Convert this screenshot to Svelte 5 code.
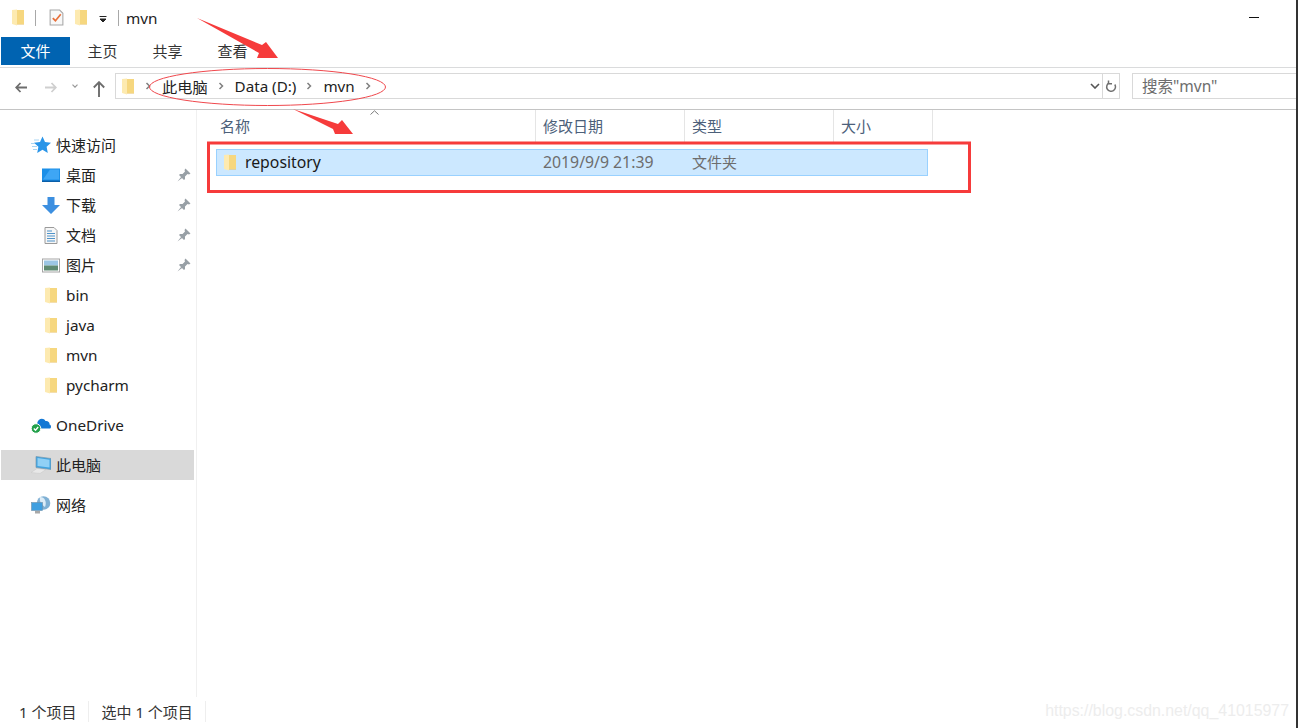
<script>
  const pinned = [
    { name: '桌面', icon: 'desktop' },
    { name: '下载', icon: 'download' },
    { name: '文档', icon: 'doc' },
    { name: '图片', icon: 'picture' }
  ];
  const folders = ['bin', 'java', 'mvn', 'pycharm'];
  const tabs = ['主页', '共享', '查看'];
  const crumbs = ['此电脑', 'Data (D:)', 'mvn'];
</script>

{#snippet folder(cls = 'ico')}
  <svg class={cls} viewBox="0 0 14 17">
    <path d="M5 1 L13 1 L13 15 L5 15 Z" fill="#f6d77f" />
    <path d="M1 1 L6 0.5 L6 16.5 L1 15 Z" fill="#fdeab0" />
    <path d="M6 15 L13 15 L13 15.5 L6 15.5 Z" fill="#e6bd5c" />
  </svg>
{/snippet}

{#snippet chevron()}
  <svg class="crumb-sep" viewBox="0 0 6 8"><path d="M1.5 1 L4.5 4 L1.5 7" fill="none" stroke="#808080" stroke-width="1.5" /></svg>
{/snippet}

<div class="window">
  <header class="titlebar">
    <span class="qa first">{@render folder()}</span>
    <span class="vline"></span>
    <svg class="check" viewBox="0 0 14 16">
      <path d="M1 1 H10 L13 4 V15 H1 Z" fill="#f8f8f8" stroke="#a8a8a8" />
      <path d="M3.5 8.5 L6 11 L11 5" fill="none" stroke="#e8703a" stroke-width="1.6" />
    </svg>
    <span class="qa">{@render folder()}</span>
    <svg class="drop" viewBox="0 0 8 7"><path d="M0.5 0.5 H7.5 M1 3 H7 L4 6 Z" stroke="#222" fill="#222" stroke-width="1" /></svg>
    <span class="vline two"></span>
    <span class="title">mvn</span>
    <span class="minimize"></span>
  </header>

  <nav class="ribbon">
    <div class="tab file">文件</div>
    {#each tabs as tab}
      <div class="tab">{tab}</div>
    {/each}
  </nav>

  <div class="addressrow">
    <svg class="nav back" viewBox="0 0 12 11"><path d="M5.5 1 L1.2 5.5 L5.5 10 M1.2 5.5 H12" fill="none" stroke="#6d6d6d" stroke-width="1.8" /></svg>
    <svg class="nav forward" viewBox="0 0 12 11"><path d="M6.5 1 L10.8 5.5 L6.5 10 M10.8 5.5 H0" fill="none" stroke="#cfcfcf" stroke-width="1.8" /></svg>
    <svg class="nav recent" viewBox="0 0 6 4"><path d="M0.5 0.7 L3 3.2 L5.5 0.7" fill="none" stroke="#9a9a9a" stroke-width="1.2" /></svg>
    <svg class="nav up" viewBox="0 0 12 16"><path d="M0.8 6.5 L6 1.2 L11.2 6.5 M6 1.2 V16" fill="none" stroke="#6d6d6d" stroke-width="1.9" /></svg>
    <div class="address">
      {@render folder('ico addr')}
      {@render chevron()}
      {#each crumbs as crumb}
        <span class="crumb">{crumb}</span>
        {@render chevron()}
      {/each}
      <svg class="addr-drop" viewBox="0 0 10 6"><path d="M1 1 L5 5 L9 1" fill="none" stroke="#555" stroke-width="1.6" /></svg>
      <span class="addr-refresh">
        <svg viewBox="0 0 12 13"><path d="M9.8 4.5 A4.4 4.4 0 1 1 4 3 M3.5 0.5 V3.8 H7" fill="none" stroke="#6f6f6f" stroke-width="1.5" /></svg>
      </span>
    </div>
    <div class="search">搜索"mvn"</div>
  </div>

  <div class="main">
    <aside class="sidebar">
      <div class="side-row top">
        <svg class="side-ico" viewBox="0 0 20 17">
          <path d="M11.5 0 L14 5.6 L20 6.3 L15.6 10.3 L16.8 16.5 L11.5 13.3 L6.2 16.5 L7.4 10.3 L3 6.3 L9 5.6 Z" fill="#2a95e8" />
          <path d="M3 3.5 H8 M0 7 H4 M1 10 H6 M2 13 H6" stroke="#a9d4f2" stroke-width="1" />
        </svg>
        <span class="cjk">快速访问</span>
      </div>
      {#each pinned as item}
        <div class="side-row sub">
          {#if item.icon === 'desktop'}
            <svg class="side-ico" viewBox="0 0 18 14">
              <rect x="0" y="0" width="18" height="13" fill="#1b8fe8" />
              <path d="M1 11 L8 1 H17 V11 Z" fill="#3ea6f5" />
              <rect x="0" y="12" width="18" height="1.5" fill="#0a5ea8" />
            </svg>
          {:else if item.icon === 'download'}
            <svg class="side-ico" viewBox="0 0 18 17"><path d="M5.5 0 H12.5 V8 H18 L9 17 L0 8 H5.5 Z" fill="#3c8fe0" /></svg>
          {:else if item.icon === 'doc'}
            <svg class="side-ico" viewBox="0 0 18 17">
              <path d="M3 0.5 H12 L15 3.5 V16.5 H3 Z" fill="#f6f6f6" stroke="#9a9a9a" />
              <path d="M5 4 H10 M5 6.5 H13 M5 9 H13 M5 11.5 H13 M5 14 H13" stroke="#4f93c9" stroke-width="1" />
            </svg>
          {:else}
            <svg class="side-ico" viewBox="0 0 18 14">
              <rect x="0.5" y="0.5" width="17" height="13" fill="#fff" stroke="#a5a5a5" />
              <rect x="2" y="2" width="14" height="5" fill="#9cc6e4" />
              <rect x="2" y="7" width="14" height="5" fill="#5f8a72" />
            </svg>
          {/if}
          <span class="cjk">{item.name}</span>
          <svg class="pin" viewBox="0 0 14 14">
            <path d="M8.5 0.5 L13.5 5.5 L12 6.5 L10.5 6 L8 8.5 L8 11 L7 12 L2 7 L3 6 L5.5 6 L8 3.5 L7.5 2 Z M4 9 L0.5 13.5 L5 10 Z" fill="#98a0a6" />
          </svg>
        </div>
      {/each}
      {#each folders as name}
        <div class="side-row sub">
          {@render folder('side-ico')}
          <span class="latin">{name}</span>
        </div>
      {/each}
      <div class="side-row top spaced">
        <svg class="side-ico" viewBox="0 0 20 17">
          <path d="M4 12 C1 12 2 6.5 6 7.5 C6.5 2 12.5 0.5 14.5 4.5 C17 4 19 6 18.5 8 C20.5 8.5 20.5 12 18.5 12 Z" fill="#1478d4" />
          <circle cx="5" cy="12" r="4.8" fill="#22a04a" stroke="#fff" />
          <path d="M2.8 12 L4.5 13.7 L7.2 10.5" fill="none" stroke="#fff" stroke-width="1.3" />
        </svg>
        <span class="latin">OneDrive</span>
      </div>
      <div class="side-row top spaced active">
        <svg class="side-ico" viewBox="0 0 20 18">
          <path d="M0 16.5 L6 12.5 L15 13.5 L9 17.5 Z" fill="#e8e8e8" stroke="#c8c8c8" stroke-width="0.5" />
          <path d="M5 0.5 L20 2.5 V13.5 L5 11.5 Z" fill="#3fa3e0" stroke="#7a99ad" stroke-width="0.7" />
          <path d="M6.5 2 L18.5 3.7 V11.5 L6.5 10 Z" fill="#90d0f5" />
        </svg>
        <span class="cjk">此电脑</span>
      </div>
      <div class="side-row top spaced">
        <svg class="side-ico" viewBox="0 0 20 18">
          <circle cx="12.5" cy="7" r="6.8" fill="#7fb0d4" />
          <path d="M9 1 C14 1 16 6 14 11 C11 9 8 6 9 1 Z" fill="#dcecf7" />
          <rect x="0.5" y="6.5" width="11" height="8" fill="#3f9fe0" stroke="#6f8fa8" stroke-width="0.6" />
          <rect x="4" y="15" width="5" height="2.5" fill="#a8a8a8" />
        </svg>
        <span class="cjk">网络</span>
      </div>
    </aside>

    <section class="content">
      <div class="columns">
        <div class="col name">名称</div>
        <div class="col">修改日期</div>
        <div class="col">类型</div>
        <div class="col size">大小</div>
        <svg class="sort" viewBox="0 0 9 5"><path d="M0.5 4.5 L4.5 0.8 L8.5 4.5" fill="none" stroke="#7a7a7a" stroke-width="1" /></svg>
      </div>
      <div class="row">
        <div class="cell name">
          {@render folder()}
          <span>repository</span>
        </div>
        <div class="cell date">2019/9/9 21:39</div>
        <div class="cell cjk">文件夹</div>
      </div>
    </section>
  </div>

  <footer class="status">
    <span class="count">1 个项目</span>
    <span class="selected">选中 1 个项目</span>
    <span class="watermark">https://blog.csdn.net/qq_41015977</span>
  </footer>

  <!-- red annotations drawn on top of the screenshot -->
  <svg class="marks" viewBox="0 0 1298 728">
    <polygon points="197,18 262,45 266,42 278,58 257,58 259,53" fill="#f63b3b" />
    <polygon points="293,109 338,124 342,120 353,134 335,134 333,129" fill="#f63b3b" />
    <ellipse cx="267.5" cy="87" rx="118" ry="18.5" fill="none" stroke="#f0484d" stroke-width="1" />
    <rect x="208.5" y="143" width="761" height="48.5" fill="none" stroke="#f63b3b" stroke-width="3" />
  </svg>
</div>

<style>
  :global(body) {
    margin: 0;
    background: #fff;
  }

  .window {
    position: relative;
    width: 1298px;
    height: 728px;
    box-sizing: border-box;
    border-right: 2px solid #333;
    display: flex;
    flex-direction: column;
    overflow: hidden;
    background: #fff;
    color: #222;
    font-family: "Noto Sans", "Noto Sans CJK SC", sans-serif;
    font-size: 15px;
  }

  .titlebar {
    height: 35px;
    padding-bottom: 2px;
    display: flex;
    align-items: center;
    padding-left: 11px;
    flex: none;
  }

  .qa {
    display: flex;
    width: 15px;
  }

  .first {
    margin-right: 9px;
  }

  .ico {
    width: 14px;
    height: 17px;
    flex: none;
  }

  .vline {
    width: 1px;
    height: 16px;
    background: #a8a8a8;
    margin-right: 13px;
  }

  .vline.two {
    margin: 0 7px 0 11px;
  }

  .check {
    width: 15px;
    height: 17px;
    margin-right: 10px;
  }

  .drop {
    width: 8px;
    height: 7px;
    margin-left: 10px;
    margin-top: 3px;
  }

  .title {
    font-size: 15.3px;
  }

  .minimize {
    width: 10px;
    height: 1px;
    background: #111;
    margin-left: auto;
    margin-right: 37px;
  }

  .ribbon {
    height: 30px;
    display: flex;
    flex: none;
    padding-left: 1px;
    border-bottom: 1px solid #dadbdc;
  }

  .tab {
    width: 65px;
    line-height: 28px;
    text-align: center;
    color: #333;
  }

  .tab.file {
    width: 69px;
    height: 28px;
    background: #0063b1;
    color: #fff;
  }

  .addressrow {
    height: 36px;
    padding-bottom: 5px;
    display: flex;
    align-items: center;
    flex: none;
    border-bottom: 1px solid #c4c4c4;
  }

  .nav {
    flex: none;
  }

  .back {
    width: 12px;
    height: 11px;
    margin-left: 15px;
    margin-top: 2px;
  }

  .forward {
    width: 12px;
    height: 11px;
    margin-left: 18px;
    margin-top: 2px;
  }

  .recent {
    width: 6px;
    height: 4px;
    margin-left: 15px;
  }

  .up {
    width: 12px;
    height: 16px;
    margin-left: 15px;
    margin-top: 5px;
    margin-right: 10px;
  }

  .address {
    width: 1005px;
    height: 26px;
    box-sizing: border-box;
    border: 1px solid #d9d9d9;
    display: flex;
    align-items: center;
    padding-left: 5px;
    flex: none;
  }

  .crumb-sep {
    width: 6px;
    height: 8px;
    flex: none;
    margin: 0 11px 0 10px;
  }

  .crumb {
    font-size: 15.2px;
    color: #222;
  }

  .addr-drop {
    width: 10px;
    height: 6px;
    margin-left: auto;
    margin-right: 2px;
  }

  .addr-refresh {
    width: 17px;
    height: 24px;
    box-sizing: border-box;
    border-left: 1px solid #d9d9d9;
    display: flex;
    align-items: center;
    justify-content: center;
  }

  .addr-refresh svg {
    width: 12px;
    height: 13px;
  }

  .search {
    margin-left: 12px;
    flex: 1;
    height: 26px;
    box-sizing: border-box;
    border: 1px solid #d9d9d9;
    border-right: 0;
    padding-left: 9px;
    line-height: 24px;
    font-size: 15.5px;
    color: #6d6d6d;
  }

  .main {
    flex: 1;
    display: flex;
    min-height: 0;
  }

  .sidebar {
    width: 197px;
    box-sizing: border-box;
    border-right: 1px solid #f0f0f0;
    padding: 20px 2px 0 1px;
    flex: none;
  }

  .side-row {
    height: 30px;
    display: flex;
    align-items: center;
    padding-left: 30px;
    box-sizing: border-box;
  }

  .side-row.sub {
    padding-left: 41px;
  }

  .side-row.spaced {
    margin-top: 10px;
  }

  .side-row.active {
    background: #d9d9d9;
  }

  .side-ico {
    width: 18px;
    height: 17px;
    flex: none;
    margin-right: 6px;
  }

  .side-row.top .side-ico {
    width: 20px;
    height: 18px;
    margin-right: 5px;
  }

  .cjk {
    padding-bottom: 2px;
  }

  .latin {
    font-size: 15.3px;
  }

  .pin {
    width: 14px;
    height: 14px;
    margin-left: auto;
    margin-right: 3px;
  }

  .content {
    flex: 1;
    padding-left: 19px;
    min-width: 0;
  }

  .columns {
    display: grid;
    grid-template-columns: 320px 149px 149px 99px;
    height: 32px;
    position: relative;
    margin-bottom: 7px;
  }

  .col {
    border-right: 1px solid #e5e5e5;
    padding-left: 7px;
    line-height: 33px;
    color: #4c607a;
  }

  .col.name {
    padding-left: 4px;
  }

  .sort {
    position: absolute;
    left: 154px;
    top: 0;
    width: 9px;
    height: 5px;
  }

  .row {
    display: grid;
    grid-template-columns: 319px 149px 149px;
    width: 712px;
    height: 27px;
    box-sizing: border-box;
    background: #cce8ff;
    border: 1px solid #99d1ff;
    align-items: center;
    color: #6d6d6d;
  }

  .cell {
    padding-left: 7px;
  }

  .cell.date {
    font-size: 15.8px;
    padding-bottom: 1px;
  }

  .cell.name {
    display: flex;
    align-items: center;
    gap: 8px;
    padding-left: 6px;
    color: #1a1a1a;
    font-size: 15.8px;
  }

  .cell.name span {
    padding-bottom: 2px;
  }

  .status {
    height: 28px;
    padding-bottom: 3px;
    flex: none;
    display: flex;
    align-items: center;
    font-size: 15px;
    color: #333;
  }

  .count {
    padding: 0 12px 0 19px;
    border-right: 1px solid #eee;
  }

  .selected {
    padding: 0 12px;
    border-right: 1px solid #eee;
  }

  .watermark {
    margin-left: auto;
    margin-right: 7px;
    font-family: "Liberation Sans", sans-serif;
    font-size: 15.9px;
    color: #ededed;
  }

  .marks {
    position: absolute;
    inset: 0;
    width: 1298px;
    height: 728px;
    pointer-events: none;
  }
</style>
